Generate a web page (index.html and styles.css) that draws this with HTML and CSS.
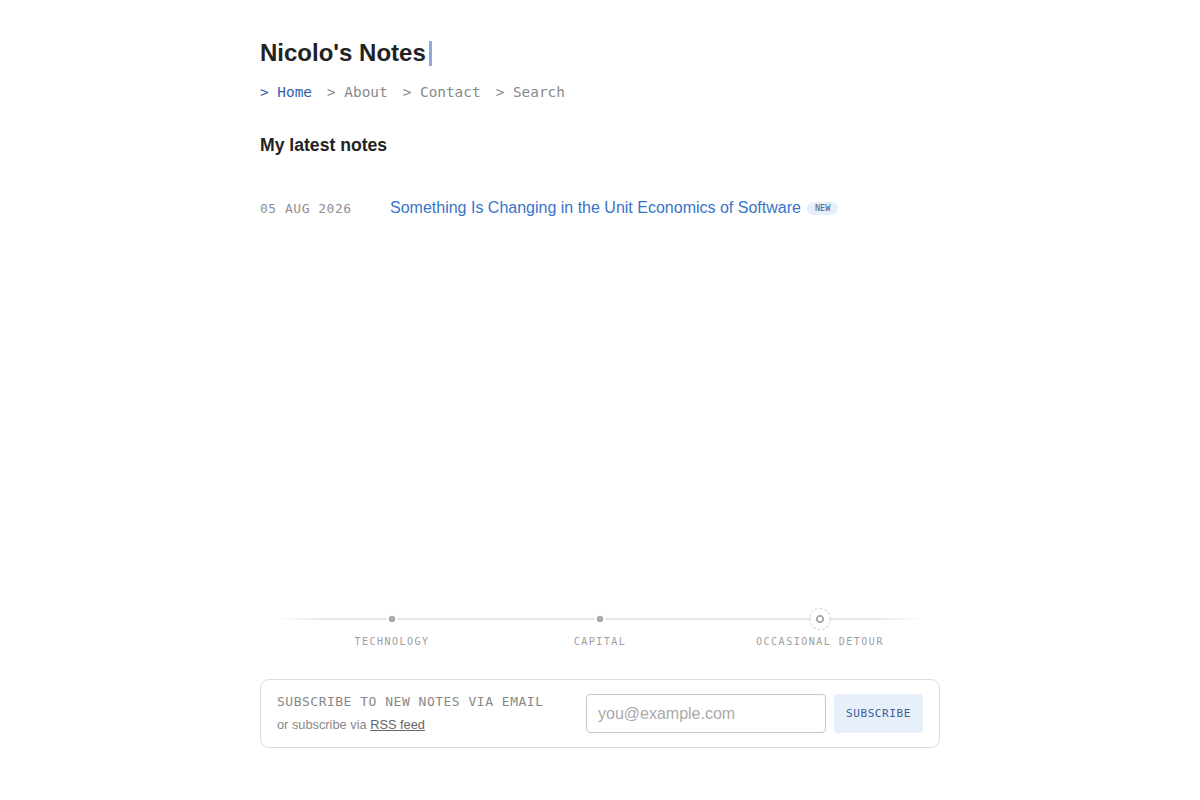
FILE: index.html
```html
<!DOCTYPE html>
<html lang="en">
<head>
<meta charset="utf-8">
<title>Nicolo's Notes</title>
<link rel="stylesheet" href="styles.css">
</head>
<body>
<div class="page">
  <header class="header">
    <h1 class="site-title">Nicolo's Notes<span class="cursor"></span></h1>
    <nav class="nav">
      <a class="nav-link active" href="#">&gt; Home</a>
      <a class="nav-link" href="#">&gt; About</a>
      <a class="nav-link" href="#">&gt; Contact</a>
      <a class="nav-link" href="#">&gt; Search</a>
    </nav>
  </header>
  <main class="main">
    <h2 class="section-title">My latest notes</h2>
    <ul class="notes">
      <li class="note">
        <span class="note-date">05 AUG 2026</span>
        <a class="note-link" href="#">Something Is Changing in the Unit Economics of Software</a>
        <span class="badge">NEW</span>
      </li>
    </ul>
  </main>
  <footer class="footer">
    <div class="timeline">
      <div class="topic">
        <span class="dot"></span>
        <span class="topic-label">TECHNOLOGY</span>
      </div>
      <div class="topic">
        <span class="dot"></span>
        <span class="topic-label">CAPITAL</span>
      </div>
      <div class="topic topic-last">
        <span class="dot ring"></span>
        <span class="topic-label">OCCASIONAL DETOUR</span>
      </div>
    </div>
    <form class="subscribe">
      <div class="sub-text">
        <div class="sub-title">SUBSCRIBE TO NEW NOTES VIA EMAIL</div>
        <div class="sub-alt">or subscribe via <a href="#" class="rss">RSS feed</a></div>
      </div>
      <input class="sub-input" type="email" placeholder="you@example.com">
      <button class="sub-btn" type="button">SUBSCRIBE</button>
    </form>
  </footer>
</div>
</body>
</html>
```

FILE: styles.css
```css
* { box-sizing: border-box; }
html, body { margin: 0; padding: 0; background: #fff; }
body {
  font-family: "Liberation Sans", Arial, sans-serif;
  color: #222;
}
.page {
  width: 680px;
  margin: 0 auto;
  min-height: 800px;
  display: flex;
  flex-direction: column;
  padding-top: 36px;
  padding-bottom: 52px;
}
.site-title {
  margin: 0;
  font-size: 24px;
  font-weight: 700;
  line-height: 34px;
  color: #222;
  display: flex;
  align-items: center;
}
.cursor {
  display: inline-block;
  width: 3px;
  height: 25px;
  background: #8eaadb;
  margin-left: 3px;
}
.nav {
  display: flex;
  gap: 15px;
  margin-top: 12px;
  font-family: "DejaVu Sans Mono", monospace;
  font-size: 14.4px;
  line-height: 20px;
}
.nav-link { color: #888; text-decoration: none; }
.nav-link.active { color: #2f5ea8; }
.main { flex: 1; }
.section-title {
  margin: 31px 0 0;
  font-size: 17.6px;
  font-weight: 700;
  line-height: 24px;
  color: #222;
}
.notes { list-style: none; margin: 37px 0 0; padding: 0; }
.note { display: flex; align-items: center; height: 28px; }
.note-date {
  font-family: "DejaVu Sans Mono", monospace;
  font-size: 13px;
  letter-spacing: 0.5px;
  color: #8f8f8f;
  width: 130px;
  flex: none;
}
.note-link {
  color: #3874c8;
  text-decoration: none;
  font-size: 16px;
}
.badge {
  margin-left: 6px;
  font-family: "DejaVu Sans Mono", monospace;
  font-size: 8.5px;
  color: #3d5d93;
  background: #e5eefb;
  border-radius: 7px;
  padding: 2px 8px;
  line-height: 9px;
}
.timeline {
  display: grid;
  grid-template-columns: 232px 184px 1fr;
  padding: 0 16px;
  position: relative;
}
.timeline::before {
  content: "";
  position: absolute;
  left: 16px;
  right: 16px;
  top: 8px;
  height: 2px;
  background: linear-gradient(to right, rgba(230,230,230,0), #e6e6e6 8%, #e6e6e6 92%, rgba(230,230,230,0));
}
.topic {
  display: flex;
  flex-direction: column;
  align-items: center;
  position: relative;
}
.topic-last { padding-left: 24px; }
.dot {
  width: 18px;
  height: 18px;
  background: radial-gradient(circle, #aaa 0 3px, #fff 3.6px 6px, transparent 6.5px);
}
.dot.ring {
  border: 1px dashed #d4d4d4;
  border-radius: 50%;
  width: 22px;
  height: 22px;
  margin-top: -2px;
  margin-bottom: -2px;
  background: radial-gradient(circle, #fff 0 2px, #aaa 2.5px 3.8px, #fff 4.3px 9px, transparent 9.5px);
}
.topic-label {
  margin-top: 8px;
  font-family: "DejaVu Sans Mono", monospace;
  font-size: 10px;
  letter-spacing: 1.5px;
  color: #9d9d9d;
}
.subscribe {
  margin-top: 32px;
  border: 1px solid #dcdcdc;
  border-radius: 9px;
  padding: 14px 16px 14px 16px;
  display: flex;
  align-items: center;
}
.sub-text { flex: 1; }
.sub-title {
  font-family: "DejaVu Sans Mono", monospace;
  font-size: 13px;
  letter-spacing: 0.5px;
  color: #888;
  line-height: 16px;
}
.sub-alt {
  margin-top: 7px;
  font-size: 12.8px;
  color: #888;
  line-height: 16px;
}
.rss { color: #666; text-decoration: underline; }
.sub-input {
  width: 240px;
  height: 39px;
  border: 1px solid #c8c8c8;
  border-radius: 4px;
  padding: 0 11px;
  font-family: "Liberation Sans", Arial, sans-serif;
  font-size: 16px;
  color: #333;
  outline: none;
}
.sub-input::placeholder { color: #aaa; }
.sub-btn {
  margin-left: 8px;
  width: 89px;
  height: 39px;
  border: none;
  border-radius: 4px;
  background: #e7effb;
  color: #3d5d93;
  font-family: "DejaVu Sans Mono", monospace;
  font-size: 11px;
  letter-spacing: 0.6px;
  cursor: pointer;
}
```
